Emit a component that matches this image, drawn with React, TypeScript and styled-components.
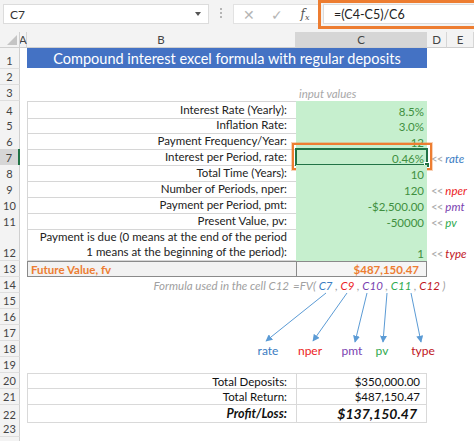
import React from 'react'
import styled, { createGlobalStyle } from 'styled-components'

const COLS = '20px 7px 269px 131px 20px 1fr'

type Tone = 'rate' | 'nper' | 'pmt' | 'pv' | 'type'

const toneColor: Record<Tone, string> = {
  rate: '#3a7cc2',
  nper: '#ec1c24',
  pmt: '#7a3fb0',
  pv: '#2eaa4f',
  type: '#c0141c',
}

const GlobalStyle = createGlobalStyle`
  html, body {
    margin: 0;
    padding: 0;
    background: #fff;
  }
  body {
    width: 474px;
    height: 441px;
    overflow: hidden;
    font-family: Lato, "Open Sans", sans-serif;
    color: #222;
  }
`

const Toolbar = styled.div`
  height: 32px;
  display: flex;
  align-items: flex-start;
  background: #f3f3f3;
`
const NameBox = styled.div`
  margin: 4px 0 0 3px;
  width: 206px;
  height: 20px;
  box-sizing: border-box;
  display: flex;
  align-items: center;
  justify-content: space-between;
  padding: 0 7px 0 6px;
  background: #fff;
  border: 1px solid #dcdcdc;
  font-size: 12px;
  color: #333;
`
const Caret = styled.span`
  width: 0;
  height: 0;
  border-left: 3px solid transparent;
  border-right: 3px solid transparent;
  border-top: 4px solid #555;
`
const Grip = styled.div`
  margin: 8px 0 0 11px;
  width: 2px;
  height: 12px;
  background: repeating-linear-gradient(#b5b5b5 0 2px, transparent 2px 4px);
`
const Buttons = styled.div`
  margin: 4px 0 0 11px;
  width: 85px;
  height: 20px;
  box-sizing: border-box;
  display: flex;
  align-items: center;
  padding-left: 8px;
  gap: 14px;
  background: #fff;
  border: 1px solid #e2e2e2;
  border-right: none;
`
const ToolIcon = styled.span`
  width: 14px;
  display: flex;
  justify-content: center;
  color: #b5b5b5;
  font-size: 14px;
`
const FxIcon = styled.span`
  width: 14px;
  display: flex;
  align-items: baseline;
  justify-content: center;
  font-family: "DejaVu Serif", serif;
  font-style: italic;
  font-size: 12px;
  color: #555;
  & > small {
    font-size: 8px;
    position: relative;
    top: 2px;
  }
`
const FormulaFrame = styled.div`
  flex: 1;
  height: 29px;
  box-sizing: border-box;
  border: 3px solid #ed7d31;
  border-right: none;
  padding: 1px 0 0 2px;
`
const FormulaInput = styled.div`
  height: 20px;
  box-sizing: border-box;
  display: flex;
  align-items: center;
  padding-left: 10px;
  background: #fff;
  border: 1px solid #dcdcdc;
  border-right: none;
  font-size: 12.5px;
  color: #222;
`

const Sheet = styled.div`
  position: relative;
`
const Row = styled.div<{ $h: number }>`
  display: grid;
  grid-template-columns: ${COLS};
  height: ${p => p.$h}px;
`
const Corner = styled.div`
  position: relative;
  background: #f3f3f3;
  border-right: 1px solid #cfcfcf;
  border-bottom: 1px solid #cfcfcf;
  &::after {
    content: '';
    position: absolute;
    right: 2px;
    bottom: 2px;
    border-left: 10px solid transparent;
    border-bottom: 10px solid #c4c4c4;
  }
`
const ColHead = styled.div<{ $active?: boolean }>`
  display: flex;
  align-items: center;
  justify-content: center;
  overflow: visible;
  background: ${p => (p.$active ? '#d6d6d6' : '#f3f3f3')};
  border-right: 1px solid #d6d6d6;
  border-bottom: 1px solid #cfcfcf;
  font-size: 11.5px;
  color: #444;
`
const RowHead = styled.div<{ $active?: boolean }>`
  grid-column: 1;
  display: flex;
  align-items: flex-end;
  justify-content: center;
  padding-bottom: 1px;
  box-sizing: border-box;
  background: ${p => (p.$active ? '#d6d6d6' : '#f3f3f3')};
  border-right: ${p => (p.$active ? '2px solid #217346' : '1px solid #cfcfcf')};
  border-bottom: 1px solid #dedede;
  font-size: 11px;
  color: #444;
`
const Title = styled.div`
  grid-column: 3 / 5;
  margin-bottom: 1px;
  display: flex;
  align-items: center;
  justify-content: center;
  background: #4472c4;
  color: #fff;
  font-size: 14.5px;
`
const Hint = styled.div`
  grid-column: 4;
  display: flex;
  align-items: flex-end;
  padding: 0 0 1px 3px;
  font-size: 11.5px;
  font-style: italic;
  color: #a8a8a8;
`
const InputLabel = styled.div<{ $first?: boolean }>`
  grid-column: 3;
  display: flex;
  flex-direction: column;
  align-items: flex-end;
  justify-content: flex-end;
  padding: 0 9px 1px 0;
  box-sizing: border-box;
  border-left: 1px solid #d6d6d6;
  border-top: ${p => (p.$first ? '1px solid #d6d6d6' : 'none')};
  border-bottom: 1px solid #d6d6d6;
  font-size: 11.5px;
  line-height: 15px;
`
const InputValue = styled.div`
  grid-column: 4;
  position: relative;
  display: flex;
  align-items: flex-end;
  justify-content: flex-end;
  padding: 0 3px 1px 0;
  box-sizing: border-box;
  background: #c6efce;
  font-size: 11.5px;
  color: #3f8f3f;
`
const Selection = styled.div`
  position: absolute;
  inset: -1px -1px 0 -1px;
  border: 2px solid #217346;
  &::after {
    content: '';
    position: absolute;
    right: -4px;
    bottom: -4px;
    width: 4px;
    height: 4px;
    background: #217346;
    border: 1px solid #fff;
  }
`
const Callout = styled.div`
  position: absolute;
  inset: -6px -5px -4px -4px;
  border: 2px solid #ed7d31;
  box-shadow: 0 0 0 1px rgba(237, 125, 49, 0.35);
`
const Note = styled.div`
  grid-column: 5 / 7;
  display: flex;
  align-items: flex-end;
  gap: 3px;
  padding: 0 0 1px 4px;
  font-size: 11.5px;
  font-style: italic;
  white-space: nowrap;
`
const Chevrons = styled.span`
  color: #a8a8a8;
  font-style: normal;
  letter-spacing: -1px;
`
const Tinted = styled.span<{ $tone: Tone }>`
  color: ${p => toneColor[p.$tone]};
`
const ResultLabel = styled.div`
  grid-column: 3;
  display: flex;
  align-items: center;
  padding-left: 3px;
  background: #f2f2f2;
  border: 1px solid #8a8a8a;
  border-right: none;
  font-size: 11.5px;
  font-weight: 700;
  color: #ed7d31;
`
const ResultValue = styled.div`
  grid-column: 4;
  display: flex;
  align-items: center;
  justify-content: flex-end;
  padding-right: 7px;
  background: #f5f5f5;
  border: 1px solid #8a8a8a;
  font-size: 11.5px;
  font-weight: 700;
  color: #ed7d31;
`
const Caption = styled.div`
  grid-column: 3;
  display: flex;
  align-items: center;
  justify-content: flex-end;
  padding-right: 7px;
  font-size: 11.5px;
  font-style: italic;
  color: #a0a0a0;
`
const FormulaNote = styled.div`
  grid-column: 4 / 7;
  display: flex;
  align-items: center;
  margin-left: -3px;
  font-size: 11.5px;
  font-style: italic;
  color: #a0a0a0;
  white-space: pre;
`
const SummaryLabel = styled.div<{ $first?: boolean; $bold?: boolean }>`
  grid-column: 3;
  display: flex;
  align-items: center;
  justify-content: flex-end;
  padding-right: 9px;
  border-left: 1px solid #d9d9d9;
  border-top: ${p => (p.$first ? '1px solid #d9d9d9' : 'none')};
  border-bottom: 1px solid #d9d9d9;
  font-size: ${p => (p.$bold ? '12.5px' : '11.5px')};
  font-weight: ${p => (p.$bold ? 700 : 400)};
  font-style: ${p => (p.$bold ? 'italic' : 'normal')};
  color: #111;
`
const SummaryValue = styled.div<{ $first?: boolean; $bold?: boolean }>`
  grid-column: 4;
  display: flex;
  align-items: center;
  justify-content: flex-end;
  padding-right: ${p => (p.$bold ? '9px' : '6px')};
  border-left: 1px solid #d9d9d9;
  border-right: 1px solid #d9d9d9;
  border-top: ${p => (p.$first ? '1px solid #d9d9d9' : 'none')};
  border-bottom: 1px solid #d9d9d9;
  font-size: ${p => (p.$bold ? '14px' : '11.5px')};
  font-weight: ${p => (p.$bold ? 700 : 400)};
  font-style: ${p => (p.$bold ? 'italic' : 'normal')};
  color: #111;
`

const Diagram = styled.div`
  position: absolute;
  left: 0;
  top: 0;
  width: 474px;
  height: 409px;
  pointer-events: none;
`
const ArgLabel = styled.span<{ $tone: Tone }>`
  position: absolute;
  transform: translate(-50%, -50%);
  font-size: 12px;
  color: ${p => toneColor[p.$tone]};
`

interface InputRow {
  n: number
  label: string[]
  value: string
  note?: Tone
  h?: number
}

const inputs: InputRow[] = [
  { n: 4, label: ['Interest Rate (Yearly):'], value: '8.5%' },
  { n: 5, label: ['Inflation Rate:'], value: '3.0%' },
  { n: 6, label: ['Payment Frequency/Year:'], value: '12' },
  { n: 7, label: ['Interest per Period, rate:'], value: '0.46%', note: 'rate' },
  { n: 8, label: ['Total Time (Years):'], value: '10' },
  { n: 9, label: ['Number of Periods, nper:'], value: '120', note: 'nper' },
  { n: 10, label: ['Payment per Period, pmt:'], value: '-$2,500.00', note: 'pmt' },
  { n: 11, label: ['Present Value, pv:'], value: '-50000', note: 'pv' },
  {
    n: 12,
    label: ['Payment is due (0 means at the end of the period', '1 means at the beginning of the period):'],
    value: '1',
    note: 'type',
    h: 32,
  },
]

// arrows from the FV arguments down to their names (sheet coordinates)
const arrows = [
  { x1: 326, y1: 261, x2: 266, y2: 309 },
  { x1: 347, y1: 261, x2: 313, y2: 309 },
  { x1: 367, y1: 261, x2: 355, y2: 310 },
  { x1: 387, y1: 261, x2: 383, y2: 310 },
  { x1: 411, y1: 261, x2: 421, y2: 310 },
]

const argLabels: { tone: Tone; x: number }[] = [
  { tone: 'rate', x: 268 },
  { tone: 'nper', x: 310 },
  { tone: 'pmt', x: 352 },
  { tone: 'pv', x: 382 },
  { tone: 'type', x: 423 },
]

const formulaArgs: { tone: Tone; text: string }[] = [
  { tone: 'rate', text: 'C7' },
  { tone: 'nper', text: 'C9' },
  { tone: 'pmt', text: 'C10' },
  { tone: 'pv', text: 'C11' },
  { tone: 'type', text: 'C12' },
]

function App() {
  return (
    <>
      <GlobalStyle />
      <Toolbar>
        <NameBox>
          C7
          <Caret />
        </NameBox>
        <Grip />
        <Buttons>
          <ToolIcon>✕</ToolIcon>
          <ToolIcon>✓</ToolIcon>
          <FxIcon>
            f<small>x</small>
          </FxIcon>
        </Buttons>
        <FormulaFrame>
          <FormulaInput>=(C4-C5)/C6</FormulaInput>
        </FormulaFrame>
      </Toolbar>

      <Sheet>
        <Row $h={16}>
          <Corner />
          <ColHead>A</ColHead>
          <ColHead>B</ColHead>
          <ColHead $active>C</ColHead>
          <ColHead>D</ColHead>
          <ColHead>E</ColHead>
        </Row>

        <Row $h={21}>
          <RowHead>1</RowHead>
          <Title>Compound interest excel formula with regular deposits</Title>
        </Row>
        <Row $h={16}>
          <RowHead>2</RowHead>
        </Row>
        <Row $h={16}>
          <RowHead>3</RowHead>
          <Hint>input values</Hint>
        </Row>

        {inputs.map((r, i) => (
          <Row key={r.n} $h={r.h ?? 16}>
            <RowHead $active={r.n === 7}>{r.n}</RowHead>
            <InputLabel $first={i === 0}>
              {r.label.map(line => (
                <span key={line}>{line}</span>
              ))}
            </InputLabel>
            <InputValue>
              {r.value}
              {r.n === 7 && (
                <>
                  <Selection />
                  <Callout />
                </>
              )}
            </InputValue>
            {r.note && (
              <Note>
                <Chevrons>&lt;&lt;</Chevrons>
                <Tinted $tone={r.note}>{r.note}</Tinted>
              </Note>
            )}
          </Row>
        ))}

        <Row $h={16}>
          <RowHead>13</RowHead>
          <ResultLabel>Future Value, fv</ResultLabel>
          <ResultValue>$487,150.47</ResultValue>
        </Row>
        <Row $h={16}>
          <RowHead>14</RowHead>
          <Caption>Formula used in the cell C12</Caption>
          <FormulaNote>
            {'=FV( '}
            {formulaArgs.map((a, i) => (
              <React.Fragment key={a.text}>
                <Tinted $tone={a.tone}>{a.text}</Tinted>
                {i < formulaArgs.length - 1 ? ' , ' : ' )'}
              </React.Fragment>
            ))}
          </FormulaNote>
        </Row>
        {[15, 16, 17, 18, 19].map(n => (
          <Row key={n} $h={16}>
            <RowHead>{n}</RowHead>
          </Row>
        ))}

        <Row $h={16}>
          <RowHead>20</RowHead>
          <SummaryLabel $first>Total Deposits:</SummaryLabel>
          <SummaryValue $first>$350,000.00</SummaryValue>
        </Row>
        <Row $h={16}>
          <RowHead>21</RowHead>
          <SummaryLabel>Total Return:</SummaryLabel>
          <SummaryValue>$487,150.47</SummaryValue>
        </Row>
        <Row $h={16}>
          <RowHead>22</RowHead>
          <SummaryLabel $bold>Profit/Loss:</SummaryLabel>
          <SummaryValue $bold>$137,150.47</SummaryValue>
        </Row>
        <Row $h={16}>
          <RowHead>23</RowHead>
        </Row>
        <Row $h={16}>
          <RowHead />
        </Row>

        <Diagram>
          <svg width="474" height="409" viewBox="0 0 474 409">
            <defs>
              <marker id="head" viewBox="0 0 10 10" refX="9" refY="5" markerWidth="7" markerHeight="7" orient="auto">
                <path d="M0 0 L10 5 L0 10 z" fill="#5b9bd5" />
              </marker>
            </defs>
            {arrows.map((a, i) => (
              <line
                key={i}
                x1={a.x1}
                y1={a.y1}
                x2={a.x2}
                y2={a.y2}
                stroke="#5b9bd5"
                strokeWidth="1"
                markerEnd="url(#head)"
              />
            ))}
          </svg>
          {argLabels.map(l => (
            <ArgLabel key={l.tone} $tone={l.tone} style={{ left: l.x, top: 318 }}>
              {l.tone}
            </ArgLabel>
          ))}
        </Diagram>
      </Sheet>
    </>
  )
}

export default App
